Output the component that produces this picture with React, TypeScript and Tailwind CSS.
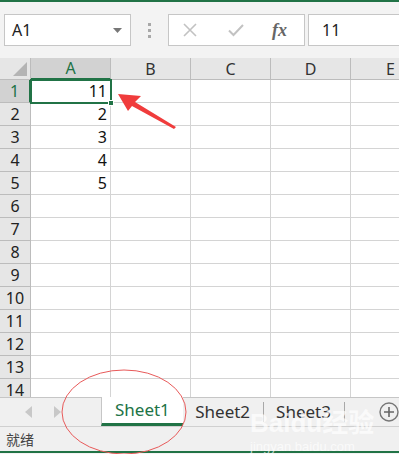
import React from "react";

const cols = ["A", "B", "C", "D", "E"];
const rows = Array.from({ length: 14 }, (_, i) => i + 1);
const values: Record<number, string> = { 1: "11", 2: "2", 3: "3", 4: "4", 5: "5" };

const font = { fontFamily: "'Noto Sans', 'Noto Sans CJK SC', sans-serif" };

function Toolbar() {
  return (
    <div className="flex items-start h-[56px] pt-[12px] pl-[4px] bg-[#f3f3f3]">
      {/* Name box */}
      <div className="relative flex items-center w-[127px] h-[32px] bg-white border border-[#c6c6c6] pl-[7px] text-[16px] text-[#222]">
        A1
        <svg className="absolute right-[8px] top-[13px]" width="9" height="5" viewBox="0 0 9 5">
          <path d="M0 0h9L4.5 5z" fill="#777" />
        </svg>
      </div>
      <div className="flex flex-col gap-[3px] mt-[9px] ml-[17px] mr-[17px]">
        <span className="w-[3px] h-[3px] bg-[#a8a8a8]" />
        <span className="w-[3px] h-[3px] bg-[#a8a8a8]" />
        <span className="w-[3px] h-[3px] bg-[#a8a8a8]" />
      </div>
      {/* Formula buttons */}
      <div className="flex items-center w-[137px] h-[32px] bg-white border border-[#c6c6c6]">
        <svg className="ml-[13px]" width="16" height="16" viewBox="0 0 16 16">
          <path d="M2 2L14 14M14 2L2 14" stroke="#c2c2c2" strokeWidth="1.6" />
        </svg>
        <svg className="ml-[30px]" width="16" height="14" viewBox="0 0 16 14">
          <path d="M1 7.5L5.5 12L15 2" stroke="#c2c2c2" strokeWidth="2" fill="none" />
        </svg>
        <span
          className="ml-[28px] text-[18px] italic font-semibold text-[#666]"
          style={{ fontFamily: "'Liberation Serif', serif" }}
        >
          fx
        </span>
      </div>
      <div className="flex items-center flex-1 h-[32px] ml-[3px] bg-white border border-r-0 border-[#c6c6c6] pl-[13px] text-[16px] text-[#222]">
        11
      </div>
    </div>
  );
}

function Grid() {
  return (
    <div className="relative h-[339px] overflow-hidden bg-white">
      <div className="grid grid-cols-[31px_80px_80px_80px_80px_80px] grid-rows-[22px] auto-rows-[23px]">
        {/* corner */}
        <div className="relative bg-[#e6e6e6] border-r border-b border-[#bcbcbc]">
          <svg className="absolute right-[3px] bottom-[3px]" width="14" height="14" viewBox="0 0 14 14">
            <path d="M14 0V14H0z" fill="#b4b4b4" />
          </svg>
        </div>
        {cols.map((c) => (
          <div
            key={c}
            className={
              c === "A"
                ? "flex items-center justify-center bg-[#d2d2d2] border-r border-b-2 border-r-[#bcbcbc] border-b-[#217346] text-[16px] text-[#217346]"
                : "flex items-center justify-center bg-[#e6e6e6] border-r border-b border-[#bcbcbc] text-[16px] text-[#333]"
            }
          >
            {c}
          </div>
        ))}
        {rows.map((r) => (
          <React.Fragment key={r}>
            <div
              className={
                r === 1
                  ? "flex items-center justify-center bg-[#d2d2d2] border-b border-r-2 border-b-[#bcbcbc] border-r-[#217346] text-[16px] text-[#217346]"
                  : "flex items-center justify-center bg-[#e6e6e6] border-b border-r border-[#bcbcbc] text-[16px] text-[#222]"
              }
            >
              {r}
            </div>
            {cols.map((c) => (
              <div
                key={c}
                className="flex items-center justify-end pr-[3px] border-r border-b border-[#d4d4d4] text-[16px] text-[#111]"
              >
                {c === "A" ? values[r] : ""}
              </div>
            ))}
          </React.Fragment>
        ))}
      </div>
      {/* active cell */}
      <div className="absolute left-[30px] top-[21px] w-[82px] h-[25px] border-2 border-[#217346]">
        <span className="absolute right-[-4px] bottom-[-4px] w-[6px] h-[6px] bg-[#217346] border border-white" />
      </div>
    </div>
  );
}

function Tabs() {
  return (
    <div className="flex items-stretch h-[29px] bg-[#f0f0f0] border-t border-[#c6c6c6]">
      <div className="flex items-center w-[101px] pl-[25px] gap-[20px]">
        <svg width="8" height="12" viewBox="0 0 8 12">
          <path d="M7 0V12L0 6z" fill="#c8c8c8" />
        </svg>
        <svg width="8" height="12" viewBox="0 0 8 12">
          <path d="M1 0V12L8 6z" fill="#c8c8c8" />
        </svg>
      </div>
      <div className="flex items-center justify-center w-[83px] -mt-px bg-white border-l border-[#c6c6c6] border-b-[3px] border-b-[#217346] text-[17px] text-[#217346]">
        Sheet1
      </div>
      <div className="flex items-center pl-[12px] text-[17px] text-[#333]">Sheet2</div>
      <div className="self-center w-px h-[20px] bg-[#a8a8a8] ml-[13px]" />
      <div className="flex items-center pl-[12px] text-[17px] text-[#333]">Sheet3</div>
      <div className="self-center w-px h-[20px] bg-[#a8a8a8] ml-[13px]" />
      <div className="flex items-center ml-[34px]">
        <svg width="20" height="20" viewBox="0 0 20 20">
          <circle cx="10" cy="10" r="9" fill="none" stroke="#777" strokeWidth="1.4" />
          <path d="M10 5V15M5 10H15" stroke="#666" strokeWidth="1.6" />
        </svg>
      </div>
    </div>
  );
}

export default function App() {
  return (
    <div className="relative w-[399px] h-[454px] overflow-hidden bg-[#f3f3f3] border-t-2 border-[#217346]" style={font}>
      <Toolbar />
      <Grid />
      <Tabs />
      <div className="flex items-center h-[27px] pl-[6px] bg-[#f0f0f0] border-t border-[#d0d0d0] text-[14px] text-[#444] border-b-2 border-b-[#217346]">
        就绪
      </div>

      {/* watermark */}
      <div className="absolute left-[250px] top-[408px] flex flex-col items-start pointer-events-none">
        <span className="text-[26px] font-bold leading-none text-white/70" style={{ fontFamily: "'Liberation Sans', 'Noto Sans CJK SC', sans-serif" }}>
          Baidu经验
        </span>
        <span className="text-[13px] leading-none mt-[4px] text-white/70" style={{ fontFamily: "'Liberation Sans', sans-serif" }}>
          jingyan.baidu.com
        </span>
      </div>

      {/* annotations */}
      <svg className="absolute left-0 top-0 pointer-events-none" width="399" height="454" viewBox="0 0 399 454">
        <path d="M118 92L141 94L135 100L176 125L174 127L132 104L128 109z" fill="#f03c3c" />
        <ellipse cx="124" cy="410" rx="62" ry="42" fill="none" stroke="#e85a5a" strokeWidth="1" />
      </svg>
    </div>
  );
}
